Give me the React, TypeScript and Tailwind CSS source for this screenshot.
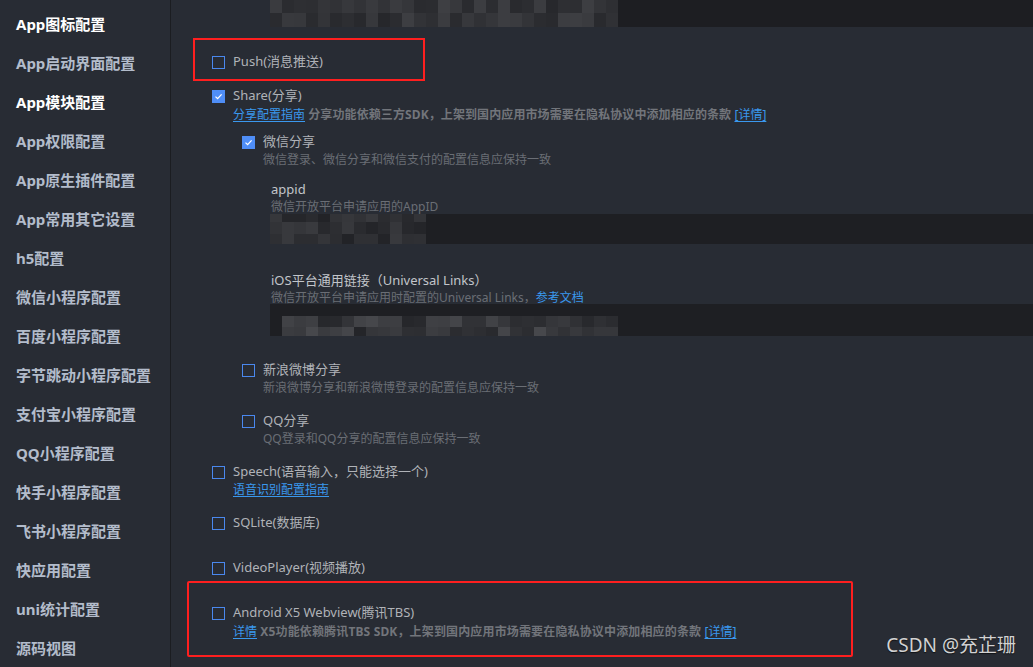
import type { ReactNode } from "react";

const MENU = [
  { label: "App图标配置", active: true },
  { label: "App启动界面配置" },
  { label: "App模块配置", active: true },
  { label: "App权限配置" },
  { label: "App原生插件配置" },
  { label: "App常用其它设置" },
  { label: "h5配置" },
  { label: "微信小程序配置" },
  { label: "百度小程序配置" },
  { label: "字节跳动小程序配置" },
  { label: "支付宝小程序配置" },
  { label: "QQ小程序配置" },
  { label: "快手小程序配置" },
  { label: "飞书小程序配置" },
  { label: "快应用配置" },
  { label: "uni统计配置" },
  { label: "源码视图" },
];

// cheap seeded noise so the pixelated (blurred) input values look the same each run
function shade(seed: number, i: number, lo: number, hi: number) {
  const x = Math.sin(seed * 97.13 + i * 12.9898) * 43758.5453;
  const f = x - Math.floor(x);
  const v = Math.round(lo + f * (hi - lo));
  return `rgb(${v},${v + 1},${v + 5})`;
}

function Mosaic({ cols, rows, seed, lo, hi, size = 12 }: { cols: number; rows: number[]; seed: number; lo: number; hi: number; size?: number }) {
  return (
    <div className="flex shrink-0 flex-col">
      {rows.map((h, r) => (
        <div key={r} className="flex">
          {Array.from({ length: cols }).map((_, c) => (
            <div key={c} style={{ width: size, height: h, backgroundColor: shade(seed + r, c, lo, hi) }} />
          ))}
        </div>
      ))}
    </div>
  );
}

function Box({ checked }: { checked?: boolean }) {
  if (checked)
    return (
      <span className="flex h-[13px] w-[13px] shrink-0 items-center justify-center bg-[#4f8ef7]">
        <svg width="9" height="9" viewBox="0 0 9 9" fill="none">
          <path d="M1.5 4.6 L3.6 6.6 L7.6 2.4" stroke="#fff" strokeWidth="1.3" />
        </svg>
      </span>
    );
  return <span className="h-[13px] w-[13px] shrink-0 border border-[#4a88ee]" />;
}

function Row({ checked, children }: { checked?: boolean; children: ReactNode }) {
  return (
    <div className="flex h-[18px] items-center">
      <Box checked={checked} />
      <span className="ml-2 whitespace-nowrap text-[13px] text-[#b0b3b8]">{children}</span>
    </div>
  );
}

function Desc({ children }: { children: ReactNode }) {
  return <div className="h-[18px] whitespace-nowrap pl-[21px] text-[12px] leading-[18px] text-[#6a6e75]">{children}</div>;
}

const link = "text-[#3a98ee] underline underline-offset-2";

export default function App() {
  return (
    <div className="flex h-[667px] w-full overflow-hidden bg-[#282c34] font-['Noto_Sans','Noto_Sans_CJK_SC',sans-serif]">
      <aside className="w-[171px] shrink-0 border-r border-[#1b1d21] pt-[5px]">
        {MENU.map((m) => (
          <div
            key={m.label}
            className={`h-[39px] whitespace-nowrap pl-4 text-[15px] font-bold leading-[39px] ${m.active ? "text-white" : "text-[#b3bccb]"}`}
          >
            {m.label}
          </div>
        ))}
      </aside>

      <main className="relative min-w-0 flex-1 overflow-hidden">
        {/* previous field, pixelated */}
        <div className="ml-[99px] flex h-[27px] bg-[#1d1e22]">
          <Mosaic cols={29} rows={[13, 14]} seed={3} lo={38} hi={62} />
        </div>

        <div className="ml-[22px] mt-[11px] h-[43px] w-[232px] border-2 border-[#ff1f1f] pl-[17px] pt-[13px]">
          <Row>Push(消息推送)</Row>
        </div>

        <div className="ml-[41px] mt-[6px]">
          <Row checked>Share(分享)</Row>
          <div className="h-[19px] whitespace-nowrap pl-[21px] text-[12px] leading-[20px]">
            <span className={link}>分享配置指南</span>
            <span className="font-bold tracking-[0.1px] text-[#72757b]"> 分享功能依赖三方SDK，上架到国内应用市场需要在隐私协议中添加相应的条款 </span>
            <span className={link}>[详情]</span>
          </div>

          <div className="ml-[30px] mt-[9px]">
            <Row checked>微信分享</Row>
            <Desc>微信登录、微信分享和微信支付的配置信息应保持一致</Desc>
          </div>
        </div>

        <div className="ml-[100px] mt-[11px] h-[18px] text-[13px] leading-[18px] text-[#c2c5ca]">appid</div>
        <div className="ml-[100px] h-[18px] whitespace-nowrap text-[12px] leading-[18px] text-[#6a6e75]">微信开放平台申请应用的AppID</div>
        <div className="relative ml-[99px] mt-[-2px] flex h-[30px] bg-[#1e1f23]">
          <Mosaic cols={13} rows={[8, 12, 10]} seed={11} lo={32} hi={58} />
        </div>

        <div className="ml-[100px] mt-[27px] h-[18px] whitespace-nowrap text-[13px] leading-[18px] text-[#c2c5ca]">
          iOS平台通用链接（Universal Links）
        </div>
        <div className="ml-[100px] h-[18px] whitespace-nowrap text-[12px] leading-[18px] text-[#6a6e75]">
          微信开放平台申请应用时配置的Universal Links，<span className={link}>参考文档</span>
        </div>
        <div className="relative ml-[99px] mt-[-3px] flex h-[32px] flex-col bg-[#1e1f23]">
          <div className="h-[12px]" />
          <div className="flex pl-[12px]">
            <Mosaic cols={28} rows={[11, 9]} seed={21} lo={36} hi={72} />
          </div>
        </div>

        <div className="ml-[71px] mt-[25px]">
          <Row>新浪微博分享</Row>
          <Desc>新浪微博分享和新浪微博登录的配置信息应保持一致</Desc>
          <div className="mt-[15px]">
            <Row>QQ分享</Row>
            <Desc>QQ登录和QQ分享的配置信息应保持一致</Desc>
          </div>
        </div>

        <div className="ml-[41px] mt-[15px]">
          <Row>Speech(语音输入，只能选择一个)</Row>
          <div className="h-[18px] pl-[21px] text-[12px] leading-[18px]">
            <span className={link}>语音识别配置指南</span>
          </div>
          <div className="mt-[15px]">
            <Row>SQLite(数据库)</Row>
          </div>
          <div className="mt-[27px]">
            <Row>VideoPlayer(视频播放)</Row>
          </div>
        </div>

        <div className="ml-[16px] mt-[4px] h-[76px] w-[666px] rounded-[2px] border-2 border-[#ff1f1f] pl-[23px] pt-[21px]">
          <Row>Android X5 Webview(腾讯TBS)</Row>
          <div className="h-[19px] whitespace-nowrap pl-[21px] text-[12px] leading-[20px]">
            <span className={link}>详情</span>
            <span className="font-bold tracking-[0.15px] text-[#72757b]"> X5功能依赖腾讯TBS SDK，上架到国内应用市场需要在隐私协议中添加相应的条款 </span>
            <span className={link}>[详情]</span>
          </div>
        </div>

        <div className="absolute bottom-[8px] right-[17px] whitespace-nowrap text-[19px] text-[#d2d2d2] [text-shadow:0_1px_1px_rgba(0,0,0,0.6)]">
          CSDN @充芷珊
        </div>
      </main>
    </div>
  );
}
